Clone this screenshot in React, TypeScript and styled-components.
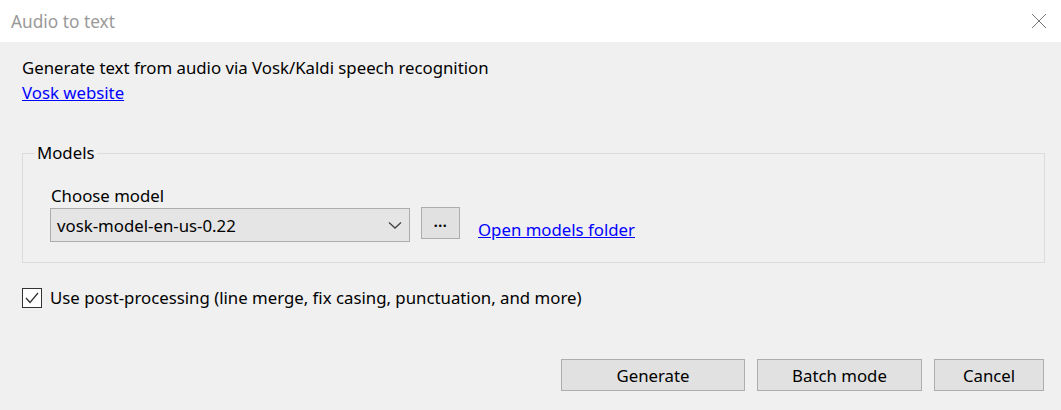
import React from "react";
import styled, { createGlobalStyle } from "styled-components";

const Global = createGlobalStyle`
  html, body { margin: 0; padding: 0; background: #f0f0f0; }
  body { font-family: "Noto Sans", "Open Sans", sans-serif; font-size: 16.8px; color: #000; }
  * { box-sizing: border-box; }
`;

const Window = styled.div`
  width: 1061px;
  height: 410px;
  background: #f0f0f0;
  display: flex;
  flex-direction: column;
  overflow: hidden;
`;

const TitleBar = styled.div`
  height: 42px;
  background: #fff;
  display: flex;
  align-items: center;
  justify-content: space-between;
  padding: 0 14px 0 11px;
`;

const Title = styled.div`
  font-size: 17.3px;
  color: #999;
`;

const CloseIcon = styled.svg`
  width: 16px;
  height: 16px;
`;

const Body = styled.div`
  flex: 1;
  display: flex;
  flex-direction: column;
  padding: 13px 16px 0 22px;
`;

const Text = styled.div`
  line-height: 25px;
`;

const Link = styled.a`
  color: #0000ff;
  text-decoration: underline;
  line-height: 25px;
  cursor: pointer;
`;

const Group = styled.fieldset`
  margin: 37px 0 0 0;
  padding: 0 0 20px 27px;
  border: 1px solid #dcdcdc;
  min-width: 0;
`;

const Legend = styled.legend`
  padding: 0 2px;
  margin-left: -15px;
  line-height: 22px;
`;

const Label = styled.div`
  margin-top: 19px;
  line-height: 25px;
  padding-left: 1px;
`;

const Row = styled.div`
  display: flex;
  align-items: flex-start;
`;

const Combo = styled.div`
  width: 360px;
  height: 34px;
  background: #e5e5e5;
  border: 1px solid #adadad;
  display: flex;
  align-items: center;
  justify-content: space-between;
  padding: 0 7px 0 6px;
`;

const SmallButton = styled.div`
  width: 39px;
  height: 32px;
  margin-left: 11px;
  margin-top: -1px;
  background: #e1e1e1;
  border: 1px solid #adadad;
  display: flex;
  align-items: center;
  justify-content: center;
  font-size: 14px;
  font-weight: 700;
  letter-spacing: 0.5px;
  padding-bottom: 4px;
`;

const FolderLink = styled(Link)`
  margin-left: 18px;
  margin-top: 9px;
`;

const CheckRow = styled.label`
  display: flex;
  align-items: center;
  height: 25px;
  margin-top: 22px;
  gap: 8px;
`;

const CheckBox = styled.span`
  width: 20px;
  height: 20px;
  border: 1px solid #333;
  background: #fff;
  display: flex;
  align-items: center;
  justify-content: center;
`;

const Buttons = styled.div`
  display: flex;
  justify-content: flex-end;
  gap: 12px;
  margin-top: 49px;
  padding-right: 1px;
`;

const Button = styled.div<{ $w: number }>`
  width: ${(p) => p.$w}px;
  height: 32px;
  background: #e1e1e1;
  border: 1px solid #adadad;
  display: flex;
  align-items: center;
  justify-content: center;
`;

export default function App() {
  return (
    <Window>
      <Global />
      <TitleBar>
        <Title>Audio to text</Title>
        <CloseIcon viewBox="0 0 16 16">
          <path d="M1 1 L15 15 M15 1 L1 15" stroke="#777" strokeWidth="1" fill="none" />
        </CloseIcon>
      </TitleBar>
      <Body>
        <Text>Generate text from audio via Vosk/Kaldi speech recognition</Text>
        <div>
          <Link>Vosk website</Link>
        </div>
        <Group>
          <Legend>Models</Legend>
          <Label>Choose model</Label>
          <Row>
            <Combo>
              <span>vosk-model-en-us-0.22</span>
              <svg width="14" height="8" viewBox="0 0 14 8">
                <path d="M1 1.5 L7 7 L13 1.5" stroke="#444" strokeWidth="1.3" fill="none" />
              </svg>
            </Combo>
            <SmallButton>...</SmallButton>
            <FolderLink>Open models folder</FolderLink>
          </Row>
        </Group>
        <CheckRow>
          <CheckBox>
            <svg width="16" height="16" viewBox="0 0 16 16">
              <path d="M2 8 L6 12.5 L14 3" stroke="#333" strokeWidth="1.3" fill="none" />
            </svg>
          </CheckBox>
          <span>Use post-processing (line merge, fix casing, punctuation, and more)</span>
        </CheckRow>
        <Buttons>
          <Button $w={184}>Generate</Button>
          <Button $w={165}>Batch mode</Button>
          <Button $w={110}>Cancel</Button>
        </Buttons>
      </Body>
    </Window>
  );
}
